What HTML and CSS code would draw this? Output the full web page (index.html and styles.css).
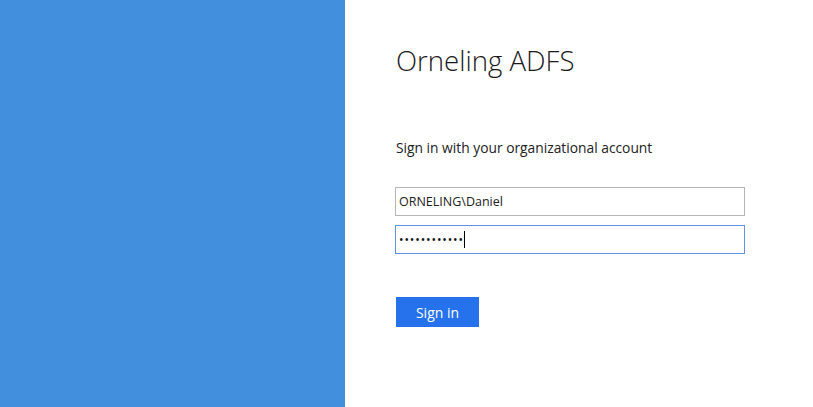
FILE: index.html
```html
<!DOCTYPE html>
<html lang="en">
<head>
<meta charset="utf-8">
<title>Sign In</title>
<link rel="stylesheet" href="styles.css">
</head>
<body>
<div class="page">
  <div class="illustration"></div>
  <main class="content">
    <h1 class="title">Orneling ADFS</h1>
    <p class="intro">Sign in with your organizational account</p>
    <form class="form">
      <div class="field">
        <div class="input">ORNELING\Daniel</div>
      </div>
      <div class="field">
        <div class="input focused"><span class="dots">••••••••••••</span><span class="caret"></span></div>
      </div>
      <div class="actions">
        <button type="button" class="submit">Sign in</button>
      </div>
    </form>
  </main>
</div>
</body>
</html>
```

FILE: styles.css
```css
* { box-sizing: border-box; }
html, body { margin: 0; padding: 0; height: 100%; }
body {
  font-family: "Open Sans", "Noto Sans", sans-serif;
  color: #212121;
  background: #fff;
}
.page {
  display: flex;
  height: 407px;
}
.illustration {
  width: 345px;
  flex: none;
  background: #428fde;
}
.content {
  flex: 1;
  padding: 42px 0 0 51px;
}
.title {
  margin: 0;
  font-weight: 300;
  font-size: 27.6px;
  line-height: 36px;
  color: #1a1a1a;
}
.intro {
  margin: 61px 0 0;
  font-size: 13.8px;
  line-height: 18px;
  color: #222;
}
.form {
  margin: 30px 0 0 -1px;
  width: 350px;
}
.field + .field { margin-top: 9px; }
.input {
  height: 29px;
  border: 1px solid #b5b5b5;
  padding: 0 3px;
  font-size: 12.5px;
  line-height: 27px;
  color: #222;
  display: flex;
  align-items: center;
}
.input.focused {
  border-color: #5f93dc;
}
.dots {
  font-size: 12px;
  letter-spacing: 0.9px;
  color: #111;
}
.caret {
  display: inline-block;
  width: 1px;
  height: 17px;
  background: #000;
  margin-left: 0;
}
.actions {
  margin: 43px 0 0 1px;
}
.submit {
  width: 83px;
  height: 30px;
  border: none;
  background: #2672ec;
  color: #fff;
  font-family: inherit;
  font-size: 14px;
  padding: 0;
  cursor: pointer;
}
```
